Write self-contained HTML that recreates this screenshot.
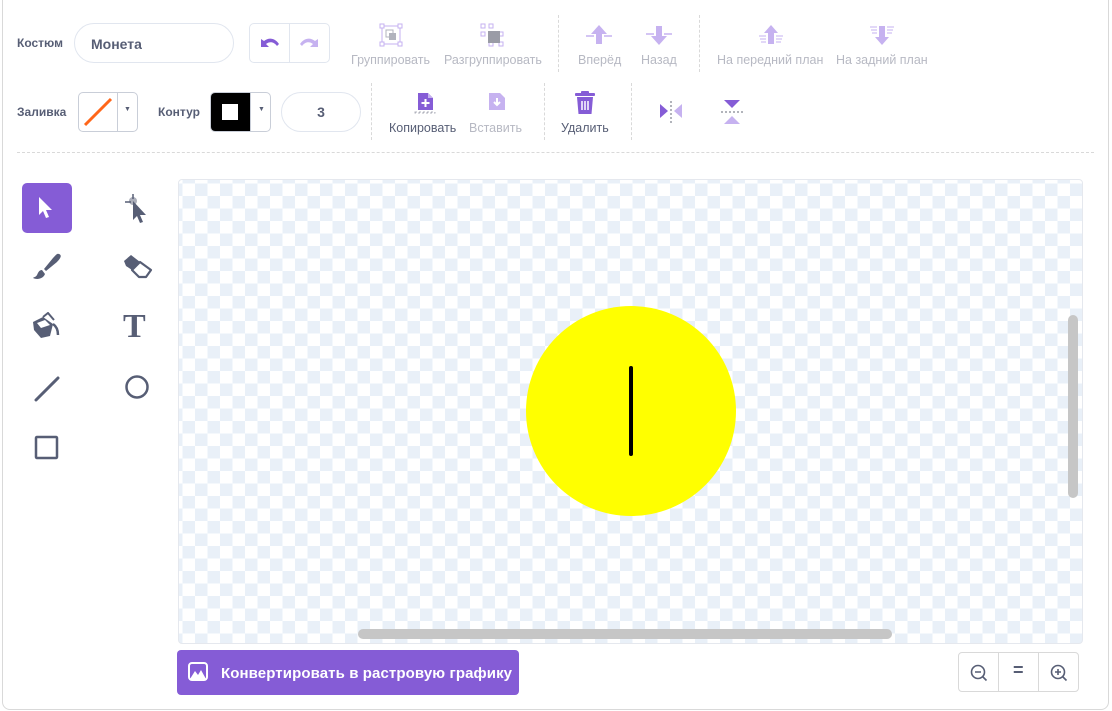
<!DOCTYPE html>
<html><head><meta charset="utf-8"><style>
*{box-sizing:border-box;margin:0;padding:0}
body{width:1112px;height:711px;background:#fff;font-family:"Liberation Sans",sans-serif;position:relative;overflow:hidden;color:#575e75}
.frame{position:absolute;left:2px;top:-10px;width:1107px;height:720px;border:1px solid #d9d9d9;border-radius:8px}
.abs{position:absolute}
.lbl{font-size:12px;font-weight:bold;color:#575e75}
.t{font-size:12.5px;text-align:center;white-space:nowrap}
.dis{color:#b7b9c3}
.vd{position:absolute;border-left:1px dashed #d9d9d9}
.inp{position:absolute;border:1px solid #e1e6ef;border-radius:20px;background:#fff;font-size:14px;font-weight:bold;color:#575e75}
.canvas{position:absolute;left:178px;top:179px;width:905px;height:465px;border:1px solid #e5e8ee;border-radius:4px;overflow:hidden;
background-color:#fff;background-image:linear-gradient(45deg,#e9f0f8 25%,transparent 25%,transparent 75%,#e9f0f8 75%),linear-gradient(45deg,#e9f0f8 25%,transparent 25%,transparent 75%,#e9f0f8 75%);
background-size:25px 25px;background-position:-9px -9px,3.5px 3.5px}
</style></head><body>
<div class="frame"></div>
<!-- row 1 -->
<div class="abs lbl" style="left:17px;top:36px">Костюм</div>
<div class="inp" style="left:74px;top:23px;width:160px;height:40px;padding:12px 16px">Монета</div>
<div class="abs" style="left:249px;top:23px;width:81px;height:40px;border:1px solid #e1e6ef;border-radius:5px"></div>
<div class="abs" style="left:289px;top:24px;width:1px;height:38px;background:#e1e6ef"></div>
<svg class="abs" style="left:259px;top:35px" width="22" height="16"><path d="M2 4 L2 12 L10 12 L7 9 C11 6 15 7 18 11 L20 9 C16 3 10 2 5 6 Z" fill="#855cd6"/></svg>
<svg class="abs" style="left:298px;top:35px" width="22" height="16"><path d="M20 4 L20 12 L12 12 L15 9 C11 6 7 7 4 11 L2 9 C6 3 12 2 17 6 Z" fill="#c6b2f0"/></svg>
<svg class="abs" style="left:379px;top:23px" width="26" height="24"><rect x="3" y="3" width="18" height="18" fill="none" stroke="#c6b2f0"/><rect x="1" y="1" width="4" height="4" fill="#fff" stroke="#c6b2f0"/><rect x="19" y="1" width="4" height="4" fill="#fff" stroke="#c6b2f0"/><rect x="1" y="19" width="4" height="4" fill="#fff" stroke="#c6b2f0"/><rect x="19" y="19" width="4" height="4" fill="#fff" stroke="#c6b2f0"/><rect x="7" y="7" width="7" height="7" fill="#fff" stroke="#b1b3bd"/><rect x="10" y="10" width="7" height="7" fill="#b1b3bd"/></svg>
<div class="abs t dis" style="left:351px;top:53px">Группировать</div>
<svg class="abs" style="left:480px;top:23px" width="26" height="24"><rect x="1" y="1" width="4" height="4" fill="#fff" stroke="#c6b2f0"/><rect x="9" y="1" width="4" height="4" fill="#fff" stroke="#c6b2f0"/><rect x="1" y="9" width="4" height="4" fill="#fff" stroke="#c6b2f0"/><rect x="19" y="9" width="4" height="4" fill="#fff" stroke="#c6b2f0"/><rect x="9" y="19" width="4" height="4" fill="#fff" stroke="#c6b2f0"/><rect x="19" y="19" width="4" height="4" fill="#fff" stroke="#c6b2f0"/><rect x="8" y="8" width="12" height="12" fill="#9a9ca6"/></svg>
<div class="abs t dis" style="left:444px;top:53px">Разгруппировать</div>
<div class="vd" style="left:558px;top:15px;height:57px"></div>
<svg class="abs" style="left:585px;top:24px" width="28" height="22"><path d="M14 1 L22 10 L17 10 L17 20 L11 20 L11 10 L6 10Z" fill="#c6b2f0"/><path d="M1 12h8M19 12h8" stroke="#c6b2f0" stroke-width="1.5"/></svg>
<div class="abs t dis" style="left:578px;top:53px">Вперёд</div>
<svg class="abs" style="left:645px;top:24px" width="28" height="22"><path d="M14 21 L22 12 L17 12 L17 2 L11 2 L11 12 L6 12Z" fill="#c6b2f0"/><path d="M1 10h8M19 10h8" stroke="#c6b2f0" stroke-width="1.5"/></svg>
<div class="abs t dis" style="left:641px;top:53px">Назад</div>
<div class="vd" style="left:699px;top:15px;height:57px"></div>
<svg class="abs" style="left:757px;top:24px" width="28" height="22"><path d="M14 1 L21 9 L17 9 L17 20 L11 20 L11 9 L7 9Z" fill="#c6b2f0"/><path d="M2 12h7M3 15h6M4 18h5M19 12h7M19 15h6M19 18h5" stroke="#c6b2f0"/></svg>
<div class="abs t dis" style="left:717px;top:53px">На передний план</div>
<svg class="abs" style="left:868px;top:24px" width="28" height="22"><path d="M14 21 L21 13 L17 13 L17 2 L11 2 L11 13 L7 13Z" fill="#c6b2f0"/><path d="M2 3h7M3 6h6M4 9h5M19 3h7M19 6h6M19 9h5" stroke="#c6b2f0"/></svg>
<div class="abs t dis" style="left:836px;top:53px">На задний план</div>
<!-- row 2 -->
<div class="abs lbl" style="left:17px;top:105px">Заливка</div>
<div class="abs" style="left:78px;top:92px;width:60px;height:40px;border:1px solid #c9ced8;border-radius:5px"></div>
<div class="abs" style="left:117px;top:93px;width:1px;height:38px;background:#c9ced8"></div>
<svg class="abs" style="left:79px;top:93px" width="38" height="38"><line x1="6" y1="32" x2="32" y2="6" stroke="#ff6619" stroke-width="3"/></svg>
<div class="abs" style="left:124px;top:106px;font-size:7px;color:#575e75">▼</div>
<div class="abs lbl" style="left:158px;top:105px">Контур</div>
<div class="abs" style="left:210px;top:92px;width:61px;height:40px;border:1px solid #c9ced8;border-radius:5px;overflow:hidden"><div style="width:40px;height:40px;background:#000;position:relative"><div style="position:absolute;left:11px;top:11px;width:16px;height:16px;background:#fff"></div></div></div>
<div class="abs" style="left:250px;top:93px;width:1px;height:38px;background:#c9ced8"></div>
<div class="abs" style="left:258px;top:106px;font-size:7px;color:#575e75">▼</div>
<div class="inp" style="left:281px;top:92px;width:80px;height:40px;padding:11px 0;text-align:center">3</div>
<div class="vd" style="left:371px;top:83px;height:57px"></div>
<svg class="abs" style="left:414px;top:91px" width="22" height="24"><rect x="1" y="21" width="20" height="1" fill="none" stroke="#b1b3bd" stroke-dasharray="2 2"/><path d="M4 2 L14 2 L19 7 L19 19 L4 19Z" fill="#855cd6"/><path d="M14 2 L14 7 L19 7" fill="#c6b2f0"/><path d="M11.5 8v8M7.5 12h8" stroke="#fff" stroke-width="2"/></svg>
<div class="abs t" style="left:389px;top:121px">Копировать</div>
<svg class="abs" style="left:486px;top:91px" width="22" height="24"><path d="M3 2 L14 2 L19 7 L19 19 L3 19Z" fill="#c6b2f0"/><path d="M11 7v7M8 11l3 3 3-3" stroke="#fff" stroke-width="2" fill="none"/></svg>
<div class="abs t dis" style="left:469px;top:121px">Вставить</div>
<div class="vd" style="left:544px;top:83px;height:57px"></div>
<svg class="abs" style="left:573px;top:90px" width="24" height="26"><rect x="2" y="3" width="20" height="3" rx="1" fill="#855cd6"/><rect x="8" y="1" width="8" height="3" rx="1" fill="#855cd6"/><path d="M4 7 L20 7 L18.5 24 L5.5 24Z" fill="#855cd6"/><path d="M9 11v9M12 11v9M15 11v9" stroke="#fff" stroke-width="1.5"/></svg>
<div class="abs t" style="left:561px;top:121px;color:#575e75">Удалить</div>
<div class="vd" style="left:631px;top:83px;height:57px"></div>
<svg class="abs" style="left:658px;top:100px" width="28" height="26"><path d="M2 4 L10 11 L2 18Z" fill="#855cd6"/><path d="M24 4 L16 11 L24 18Z" fill="#c6b2f0"/><circle cx="13" cy="2" r="1" fill="#9a9ca6"/><circle cx="13" cy="6" r="1" fill="#9a9ca6"/><circle cx="13" cy="10" r="1" fill="#9a9ca6"/><circle cx="13" cy="14" r="1" fill="#9a9ca6"/><circle cx="13" cy="18" r="1" fill="#9a9ca6"/><circle cx="13" cy="22" r="1" fill="#9a9ca6"/></svg>
<svg class="abs" style="left:720px;top:99px" width="26" height="26"><path d="M4 1 L20 1 L12 9Z" fill="#855cd6"/><path d="M4 25 L20 25 L12 17Z" fill="#c6b2f0"/><g fill="#9a9ca6"><circle cx="2" cy="13" r="1"/><circle cx="6" cy="13" r="1"/><circle cx="10" cy="13" r="1"/><circle cx="14" cy="13" r="1"/><circle cx="18" cy="13" r="1"/><circle cx="22" cy="13" r="1"/></g></svg>
<div class="abs" style="left:17px;top:152px;width:1077px;border-top:1px dashed #d9d9d9"></div>
<!-- tools -->
<div class="abs" style="left:22px;top:183px;width:50px;height:50px;background:#855cd6;border-radius:5px"></div>
<svg class="abs" style="left:36px;top:196px" width="24" height="26"><path d="M3 1 L3 19 L7 15 L10 22 L13 21 L10 14 L16 14Z" fill="#fff"/></svg>
<svg class="abs" style="left:121px;top:192px" width="30" height="34"><circle cx="12" cy="9" r="4" fill="#575e75" opacity=".5"/><path d="M4 10h6M12 2v5" stroke="#575e75" stroke-width="1.5"/><path d="M12 9 L12 28 L16 24 L19 31 L22 30 L19 23 L25 23Z" fill="#575e75"/></svg>
<svg class="abs" style="left:31px;top:252px" width="34" height="30"><path d="M28 2 C31 3 30 6 26 10 L15 19 L13 17 L22 6 C25 3 26 1 28 2Z" fill="#575e75"/><path d="M11 18 C8 18 7 21 6 23 C5 25 3 25 2 26 C6 28 12 27 14 22Z" fill="#575e75"/></svg>
<svg class="abs" style="left:121px;top:252px" width="34" height="30"><path d="M3 9 L10 3 L19 10 L11 18 L5 14Z" fill="#575e75"/><path d="M19 10 L30 18 L25 25 L18 25 L11 18Z" fill="none" stroke="#575e75" stroke-width="2.2" stroke-linejoin="round"/></svg>
<svg class="abs" style="left:31px;top:312px" width="34" height="30"><path d="M2 10 L12 5 L22 12 L19 24 L10 26 L3 18Z" fill="#575e75"/><path d="M12 5 L17 1 L23 8" fill="none" stroke="#575e75" stroke-width="2"/><path d="M22 12 C25 14 27 18 27 23" stroke="#575e75" stroke-width="2.5" fill="none"/><path d="M6 11 L14 8 L19 13 L10 16Z" fill="#fff"/></svg>
<div class="abs" style="left:123px;top:308px;font-family:'Liberation Serif',serif;font-size:34px;font-weight:bold;color:#575e75">T</div>
<svg class="abs" style="left:32px;top:374px" width="30" height="30"><line x1="4" y1="26" x2="26" y2="4" stroke="#575e75" stroke-width="3" stroke-linecap="round"/></svg>
<svg class="abs" style="left:124px;top:374px" width="28" height="28"><circle cx="13" cy="13" r="10.5" fill="none" stroke="#575e75" stroke-width="2.5"/></svg>
<svg class="abs" style="left:34px;top:435px" width="26" height="26"><rect x="2" y="2" width="21" height="21" rx="1" fill="none" stroke="#575e75" stroke-width="2.5"/></svg>
<!-- canvas -->
<div class="canvas">
<svg class="abs" style="left:347px;top:126px" width="212" height="212"><circle cx="105" cy="105" r="105" fill="#ffff00"/><line x1="105" y1="62" x2="105" y2="148" stroke="#000" stroke-width="4" stroke-linecap="round"/></svg>
<div class="abs" style="left:889px;top:135px;width:10px;height:183px;background:#c6c6c6;border-radius:5px"></div>
<div class="abs" style="left:179px;top:449px;width:534px;height:10px;background:#c6c6c6;border-radius:5px"></div>
</div>
<!-- bottom -->
<div class="abs" style="left:177px;top:650px;width:342px;height:45px;background:#855cd6;border-radius:4px"></div>
<svg class="abs" style="left:188px;top:662px" width="22" height="20"><rect x="1" y="1" width="18" height="17" rx="3" fill="none" stroke="#fff" stroke-width="2"/><path d="M2 17 L7 9 L10 13 L13 8 L18 17Z" fill="#fff"/></svg>
<div class="abs" style="left:221px;top:665px;font-size:15px;font-weight:bold;color:#fff;letter-spacing:0.1px">Конвертировать в растровую графику</div>
<div class="abs" style="left:958px;top:652px;width:121px;height:40px;border:1px solid #d9d9d9;border-radius:4px"></div>
<div class="abs" style="left:998px;top:653px;width:1px;height:38px;background:#d9d9d9"></div>
<div class="abs" style="left:1038px;top:653px;width:1px;height:38px;background:#d9d9d9"></div>
<svg class="abs" style="left:969px;top:663px" width="20" height="20"><circle cx="9" cy="9" r="6.5" fill="none" stroke="#575e75" stroke-width="1.6"/><path d="M6 9h6M13.5 13.5l4 4" stroke="#575e75" stroke-width="1.6"/></svg>
<div class="abs" style="left:1013px;top:660px;font-size:18px;font-weight:bold;color:#575e75">=</div>
<svg class="abs" style="left:1049px;top:663px" width="20" height="20"><circle cx="9" cy="9" r="6.5" fill="none" stroke="#575e75" stroke-width="1.6"/><path d="M6 9h6M9 6v6M13.5 13.5l4 4" stroke="#575e75" stroke-width="1.6"/></svg>
</body></html>
